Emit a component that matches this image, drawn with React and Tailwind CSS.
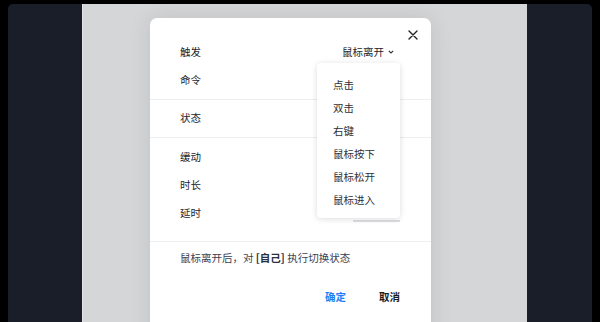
import { useState } from "react";

const triggers = ["点击", "双击", "右键", "鼠标按下", "鼠标松开", "鼠标进入"];

function Row({ label, children }) {
  return (
    <div className="flex h-[28px] items-center justify-between">
      <span>{label}</span>
      {children}
    </div>
  );
}

export default function App() {
  const [trigger, setTrigger] = useState("鼠标离开");
  const [open, setOpen] = useState(true);

  return (
    <div
      className="flex h-[322px] w-[600px] overflow-hidden bg-black pl-[8px] pr-[8px] pt-[4px]"
      style={{ fontFamily: '"Noto Sans CJK SC", "Noto Sans", sans-serif' }}
    >
      <div className="w-[74px] shrink-0 rounded-tl-[5px] bg-[#1a1e29]" />
      <div className="flex w-[445px] shrink-0 border-l border-[#e2e3e5] bg-[#d5d6d8] pl-[67px] pt-[14px]">
        <div className="relative h-[400px] w-[281px] shrink-0 rounded-[7px] bg-white text-[10.5px] text-[#22262d] shadow-[0_0_22px_rgba(0,0,0,0.10)]">
          <button className="absolute right-[13px] top-[12px] flex h-[10px] w-[10px] items-center justify-center text-[#222]">
            <svg width="10" height="10" viewBox="0 0 10 10">
              <path d="M1 1 L9 9 M9 1 L1 9" stroke="currentColor" strokeWidth="1.4" strokeLinecap="round" />
            </svg>
          </button>

          <div className="pb-[5px] pl-[30px] pr-[37px] pt-[20px]">
            <Row label="触发">
              <button className="flex items-center gap-[4px]" onClick={() => setOpen(!open)}>
                {trigger}
                <svg width="6" height="4" viewBox="0 0 6 4">
                  <path d="M0.8 0.8 L3 3 L5.2 0.8" fill="none" stroke="#333" strokeWidth="1.1" />
                </svg>
              </button>
            </Row>
            <Row label="命令" />
          </div>
          <div className="h-px bg-[#eceef2]" />

          <div className="pb-[5px] pl-[30px] pr-[37px] pt-[4px]">
            <Row label="状态" />
          </div>
          <div className="h-px bg-[#eceef2]" />

          <div className="pb-[14px] pl-[30px] pr-[37px] pt-[5px]">
            <Row label="缓动" />
            <Row label="时长" />
            <Row label="延时" />
          </div>
          <div className="h-px bg-[#eceef2]" />

          <div className="pl-[30px] pr-[31px] pt-[8px]">
            <p className="leading-[16px] text-[#3a4152]">
              鼠标离开后，对 <b className="font-semibold text-[#2a3040]">[自己]</b> 执行切换状态
            </p>
            <div className="mt-[17px] flex h-[28px] items-center justify-end gap-[33px] font-semibold">
              <button className="text-[#1e7ff5]">确定</button>
              <button className="text-[#1c1c1c]">取消</button>
            </div>
          </div>

          <div className="absolute left-[203px] top-[202px] h-[2px] w-[47px] bg-[#dcdde0]" />

          {open && (
            <ul className="absolute left-[167px] top-[45px] w-[83px] rounded-[4px] bg-white pb-[7px] pt-[10px] shadow-[0_1px_6px_rgba(0,0,0,0.14)]">
              {triggers.map((t) => (
                <li
                  key={t}
                  className="flex h-[23px] cursor-pointer items-center pl-[16px] text-[#2e3138]"
                  onClick={() => {
                    setTrigger(t);
                    setOpen(false);
                  }}
                >
                  {t}
                </li>
              ))}
            </ul>
          )}
        </div>
      </div>
      <div className="w-[65px] shrink-0 rounded-tr-[5px] bg-[#1a1e29]" />
    </div>
  );
}
